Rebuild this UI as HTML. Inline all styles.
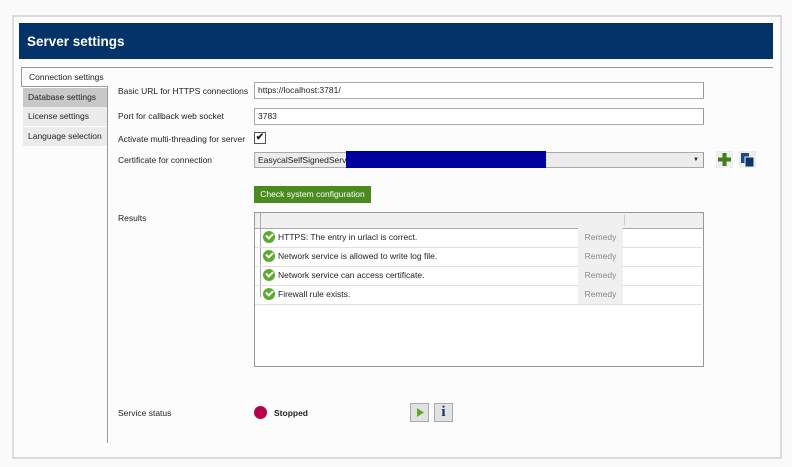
<!DOCTYPE html>
<html><head><style>
body{margin:0;width:792px;height:467px;background:#fafafa;font-family:"Liberation Sans",sans-serif;font-size:8.5px;color:#222;position:relative;overflow:hidden}
.a{position:absolute}
.frame{left:12px;top:15px;width:766px;height:440px;border:2px solid #dcdcdc;background:#fcfcfc}
.hdr{left:19px;top:23px;width:754px;height:36px;background:#033369;color:#fff;font-weight:bold;font-size:13.5px;line-height:37px;padding-left:8px;box-sizing:border-box}
.lbl{left:118px}
.inp{left:254px;width:450px;height:17px;border:1px solid #aaa;border-right-color:#999;background:#fff;line-height:15px;padding-left:3px;box-sizing:border-box}
.tab{left:23px;width:84px;height:19px;line-height:19px;padding-left:5px;box-sizing:border-box;background:#ebebeb}
.row{left:255px;width:447px;height:19px;border-bottom:1px solid #e0e0e0;line-height:19px}
.ck{position:absolute;left:8px;top:3px;width:12px;height:12px;border-radius:50%;background:#5aab2e}
.ck:after{content:"";position:absolute;left:3px;top:2px;width:5px;height:3px;border-left:2px solid #fff;border-bottom:2px solid #fff;transform:rotate(-45deg)}
.rem{position:absolute;left:323px;top:0;width:45px;height:19px;background:#f0f0f0;color:#888;text-align:center}
</style></head><body>
<div class="a frame"></div>
<div class="a hdr">Server settings</div>
<div class="a" style="left:107px;top:67px;width:666px;height:1px;background:#999"></div>
<div class="a" style="left:107px;top:67px;width:1px;height:376px;background:#999"></div>
<div class="a" style="left:21px;top:67px;width:87px;height:20px;background:#fcfcfc;border:1px solid #999;border-right:none;box-sizing:border-box;line-height:19px;padding-left:7px">Connection settings</div>
<div class="a tab" style="top:88px;background:#c8c8c8">Database settings</div>
<div class="a tab" style="top:107px">License settings</div>
<div class="a tab" style="top:127px">Language selection</div>
<div class="a lbl" style="top:86px">Basic URL for HTTPS connections</div>
<div class="a lbl" style="top:111px">Port for callback web socket</div>
<div class="a lbl" style="top:134px">Activate multi-threading for server</div>
<div class="a lbl" style="top:155px">Certificate for connection</div>
<div class="a lbl" style="top:213px">Results</div>
<div class="a inp" style="top:82px">https://localhost:3781/</div>
<div class="a inp" style="top:108px">3783</div>
<div class="a" style="left:254px;top:132px;width:10px;height:10px;border:1px solid #555;background:#fff;font-size:10px;line-height:10px;text-align:center;font-weight:bold">✔</div>
<div class="a inp" style="top:152px;height:16px;background:#ececec;line-height:15px">EasycalSelfSignedServer<span style="position:absolute;right:4px;font-size:6px">▼</span></div>
<div class="a" style="left:346px;top:151px;width:200px;height:17px;background:#00009e"></div>
<div class="a" style="left:716px;top:151px;width:17px;height:17px;background:#eee"><svg width="17" height="17"><path d="M8.5 2v13M2 8.5h13" stroke="#3f7f1e" stroke-width="4"/></svg></div>
<div class="a" style="left:739px;top:151px;width:17px;height:17px;background:#eee"><svg width="17" height="17"><rect x="2" y="2" width="8" height="10" fill="#1a4e8a"/><rect x="6" y="6" width="9" height="10" fill="#0d3566" stroke="#eee"/></svg></div>
<div class="a" style="left:254px;top:186px;width:117px;height:17px;background:#4b8a1f;color:#fff;line-height:17px;text-align:center">Check system configuration</div>
<div class="a" style="left:254px;top:212px;width:450px;height:155px;border:1px solid #999;background:#fff;box-sizing:border-box"></div>
<div class="a" style="left:255px;top:213px;width:448px;height:15px;background:#f0f0f0;border-bottom:1px solid #aaa"></div>
<div class="a" style="left:260px;top:213px;width:1px;height:84px;background:#aaa"></div>
<div class="a" style="left:624px;top:215px;width:1px;height:10px;background:#ccc"></div>
<div class="a row" style="top:228px"><span class="ck"></span><span style="margin-left:23px">HTTPS: The entry in urlacl is correct.</span><span class="rem">Remedy</span></div>
<div class="a row" style="top:247px"><span class="ck"></span><span style="margin-left:23px">Network service is allowed to write log file.</span><span class="rem">Remedy</span></div>
<div class="a row" style="top:266px"><span class="ck"></span><span style="margin-left:23px">Network service can access certificate.</span><span class="rem">Remedy</span></div>
<div class="a row" style="top:285px"><span class="ck"></span><span style="margin-left:23px">Firewall rule exists.</span><span class="rem">Remedy</span></div>
<div class="a lbl" style="top:408px">Service status</div>
<div class="a" style="left:254px;top:406px;width:13px;height:13px;border-radius:50%;background:#b8004f"></div>
<div class="a" style="left:274px;top:408px;font-weight:bold">Stopped</div>
<div class="a" style="left:410px;top:403px;width:19px;height:19px;background:#e2e2e2;border:1px solid #aaa;box-sizing:border-box"><svg width="17" height="17"><path d="M6 4l7 4.5-7 4.5z" fill="#5aab2e"/></svg></div>
<div class="a" style="left:434px;top:403px;width:19px;height:19px;background:#e2e2e2;border:1px solid #aaa;box-sizing:border-box;color:#0d3566;font-weight:bold;font-family:'Liberation Serif',serif;font-size:15px;text-align:center;line-height:17px">i</div>
</body></html>
